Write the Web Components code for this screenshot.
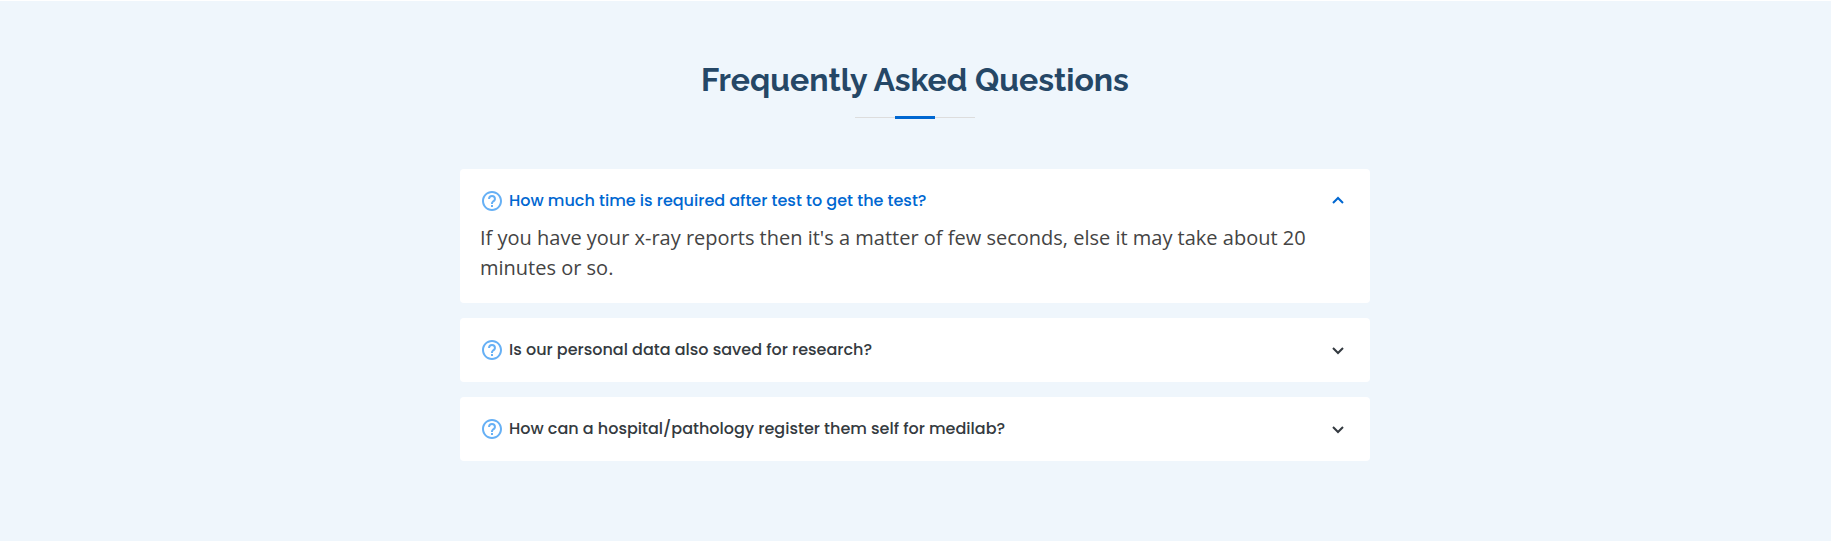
<!DOCTYPE html>
<html lang="en">
<head>
<meta charset="utf-8">
<meta name="viewport" content="width=device-width, initial-scale=1">
<title>Frequently Asked Questions</title>
<style>
  body { margin: 0; background: #fff; color: #444; font-family: "Open Sans", sans-serif; }
</style>
</head>
<body>

<faq-section>
  <section-title slot="title">Frequently Asked Questions</section-title>
  <faq-item open>
    <span slot="question">How much time is required after test to get the test?</span>
    If you have your x-ray reports then it's a matter of few seconds, else it may take about 20 minutes or so.
  </faq-item>
  <faq-item>
    <span slot="question">Is our personal data also saved for research?</span>
  </faq-item>
  <faq-item>
    <span slot="question">How can a hospital/pathology register them self for medilab?</span>
  </faq-item>
</faq-section>

<template id="faq-section">
  <style>
    :host { display: block; padding-top: 1px; }
    section { background: #eff6fc; padding: 60px 21px 80px 20px; }
    .list { display: flex; flex-direction: column; gap: 15px; max-width: 910px; margin: 50px auto 0; }
  </style>
  <section>
    <slot name="title"></slot>
    <div class="list"><slot></slot></div>
  </section>
</template>

<template id="section-title">
  <style>
    :host { display: block; }
    h2 { margin: 0; color: #254766; font: 700 32px/38px Raleway, Lato, sans-serif; text-align: center; }
    .rule { display: flex; align-items: center; width: 120px; height: 3px; margin: 17px auto 0; }
    .rule::before, .rule::after { content: ""; flex: 1; height: 1px; background: #ddd; }
    .rule i { width: 40px; height: 3px; background: #0067d1; }
  </style>
  <h2><slot></slot></h2>
  <div class="rule"><i></i></div>
</template>

<template id="faq-item">
  <style>
    :host { display: block; padding: 20px; background: #fff; border-radius: 4px; }
    h3 { margin: 0; font: inherit; }
    button {
      display: flex; align-items: center; width: 100%; padding: 0; border: 0;
      background: none; color: #343a40; cursor: pointer; text-align: left;
      font: 500 16px/24px Poppins, Inter, sans-serif;
    }
    :host([open]) button { color: #0067d1; }
    .label { flex: 1; margin-left: 5px; }
    svg { flex: none; width: 24px; height: 24px; fill: currentColor; }
    .help { color: #66b0f5; }
    .up, .answer { display: none; }
    :host([open]) .up, :host([open]) .answer { display: block; }
    :host([open]) .down { display: none; }
    .answer { margin-top: 10px; font-size: 20px; line-height: 30px; }
  </style>
  <h3>
    <button type="button" aria-controls="answer">
      <svg class="help" viewBox="0 0 24 24" aria-hidden="true"><path d="M12 6a3.939 3.939 0 0 0-3.934 3.934h2C10.066 8.867 10.934 8 12 8s1.934.867 1.934 1.934c0 .598-.481 1.032-1.216 1.626a9.208 9.208 0 0 0-.691.599c-.998.997-1.027 2.056-1.027 2.174V15h2l-.001-.633c.001-.016.033-.386.441-.793.15-.15.339-.3.535-.458.779-.631 1.958-1.584 1.958-3.182A3.937 3.937 0 0 0 12 6zm-1 10h2v2h-2z"/><path d="M12 2C6.486 2 2 6.486 2 12s4.486 10 10 10 10-4.486 10-10S17.514 2 12 2zm0 18c-4.411 0-8-3.589-8-8s3.589-8 8-8 8 3.589 8 8-3.589 8-8 8z"/></svg>
      <span class="label"><slot name="question"></slot></span>
      <svg class="up" viewBox="0 0 24 24" aria-hidden="true"><path d="m6.293 13.293 1.414 1.414L12 10.414l4.293 4.293 1.414-1.414L12 7.586z"/></svg>
      <svg class="down" viewBox="0 0 24 24" aria-hidden="true"><path d="M16.293 9.293 12 13.586 7.707 9.293l-1.414 1.414L12 16.414l5.707-5.707z"/></svg>
    </button>
  </h3>
  <div class="answer" id="answer"><slot></slot></div>
</template>

<script>
  class TemplateElement extends HTMLElement {
    constructor() {
      super();
      const template = document.getElementById(this.localName);
      this.attachShadow({ mode: "open" }).append(template.content.cloneNode(true));
    }
  }

  class FaqItem extends TemplateElement {
    static observedAttributes = ["open"];
    constructor() {
      super();
      this.button = this.shadowRoot.querySelector("button");
      this.button.addEventListener("click", () => this.toggleAttribute("open"));
    }
    connectedCallback() { this.sync(); }
    attributeChangedCallback() { this.sync(); }
    sync() { this.button.setAttribute("aria-expanded", String(this.hasAttribute("open"))); }
  }

  customElements.define("faq-section", class extends TemplateElement {});
  customElements.define("section-title", class extends TemplateElement {});
  customElements.define("faq-item", FaqItem);
</script>
</body>
</html>
